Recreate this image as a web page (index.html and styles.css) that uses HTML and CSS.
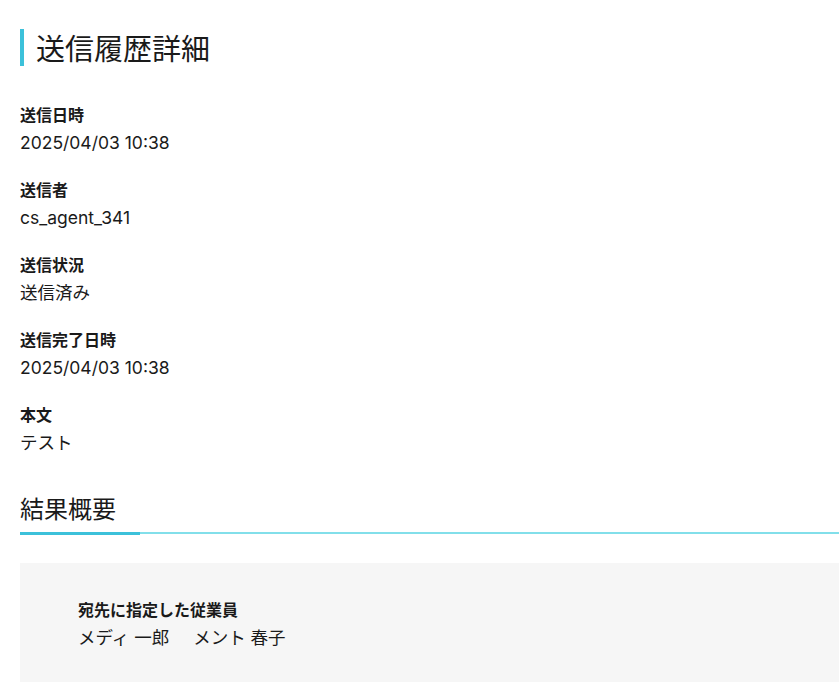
FILE: index.html
```html
<!DOCTYPE html>
<html lang="ja">
<head>
<meta charset="utf-8">
<title>送信履歴詳細</title>
<link rel="stylesheet" href="styles.css">
</head>
<body>
<main class="page">
  <h1 class="page-title">送信履歴詳細</h1>
  <dl class="details">
    <div class="field">
      <dt class="field-label">送信日時</dt>
      <dd class="field-value">2025/04/03 10:38</dd>
    </div>
    <div class="field">
      <dt class="field-label">送信者</dt>
      <dd class="field-value">cs_agent_341</dd>
    </div>
    <div class="field">
      <dt class="field-label">送信状況</dt>
      <dd class="field-value">送信済み</dd>
    </div>
    <div class="field">
      <dt class="field-label">送信完了日時</dt>
      <dd class="field-value">2025/04/03 10:38</dd>
    </div>
    <div class="field">
      <dt class="field-label">本文</dt>
      <dd class="field-value">テスト</dd>
    </div>
  </dl>
  <h2 class="section-title">結果概要</h2>
  <section class="summary">
    <div class="field-label">宛先に指定した従業員</div>
    <div class="field-value names">
      <span class="name">メディ 一郎</span>
      <span class="name">メント 春子</span>
    </div>
  </section>
</main>
</body>
</html>
```

FILE: styles.css
```css
html, body {
  margin: 0;
  padding: 0;
  background: #ffffff;
}
body {
  font-family: "Noto Sans CJK JP", "Noto Sans", sans-serif;
  color: #1a1a1a;
}
.page {
  padding: 29px 0 0 20px;
}
.page-title {
  margin: 0;
  border-left: 4px solid #3cc1da;
  padding-left: 12px;
  font-size: 29px;
  line-height: 37px;
  font-weight: 400;
}
.details {
  margin: 36px 0 0 0;
}
.field {
  margin-bottom: 20px;
}
.field-label {
  font-size: 16px;
  line-height: 24px;
  font-weight: 700;
  margin: 0;
}
.field-value {
  font-family: "Inter", "Noto Sans CJK JP", sans-serif;
  font-size: 17.5px;
  line-height: 28px;
  margin: 3px 0 0 0;
}
.section-title {
  position: relative;
  margin: 35px 0 0 0;
  padding-bottom: 8px;
  font-size: 24px;
  line-height: 32px;
  font-weight: 400;
  border-bottom: 2px solid #82dfea;
}
.section-title::after {
  content: "";
  position: absolute;
  left: 0;
  bottom: -3px;
  width: 120px;
  height: 3px;
  background: #3cc1da;
}
.summary {
  margin-top: 29px;
  background: #f6f6f6;
  padding: 34px 20px 30px 58px;
}
.names {
  display: flex;
  gap: 24px;
}
```
